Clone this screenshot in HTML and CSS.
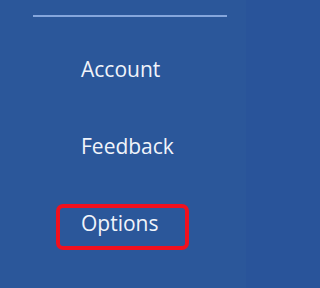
FILE: index.html
```html
<!DOCTYPE html>
<html>
<head>
<meta charset="utf-8">
<link rel="stylesheet" href="styles.css">
</head>
<body>
<div class="page">
  <div class="panel">
    <div class="divider"></div>
    <nav class="menu">
      <div class="item">Account</div>
      <div class="item">Feedback</div>
      <div class="item highlight">Options</div>
    </nav>
  </div>
  <div class="edge"></div>
</div>
</body>
</html>
```
FILE: styles.css
```css
html, body {
  margin: 0;
  padding: 0;
  background: #29549a;
}
.page {
  display: flex;
  width: 100%;
  min-width: 261px;
  height: 288px;
  overflow: hidden;
}
.panel {
  width: 246px;
  flex: none;
  display: flex;
  flex-direction: column;
  padding-top: 15px;
  box-sizing: border-box;
  background: #2b579a;
}
.edge {
  flex: 1;
  background: #29549a;
}
.divider {
  margin-left: 33px;
  width: 194px;
  height: 2px;
  background: #85a6dc;
}
.menu {
  display: flex;
  flex-direction: column;
  gap: 31px;
  margin-top: 33px;
  padding-left: 56px;
}
.item {
  box-sizing: border-box;
  width: 133px;
  height: 46px;
  border: 4px solid transparent;
  border-radius: 7px;
  padding: 1px 0 0 21px;
  font-family: "Open Sans", "Noto Sans", sans-serif;
  font-size: 21px;
  line-height: 28px;
  color: #f1f4fa;
}
.item.highlight {
  border-color: #f0101e;
}
```
